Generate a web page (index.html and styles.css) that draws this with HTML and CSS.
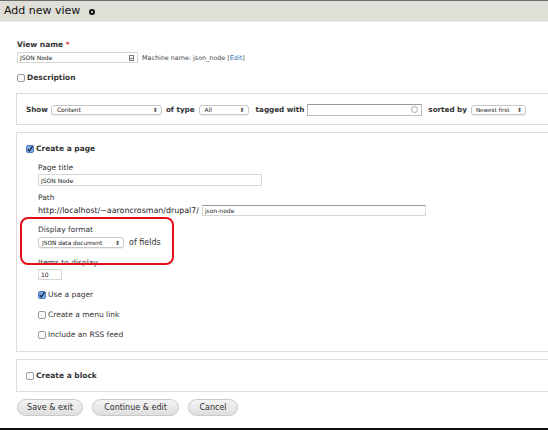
FILE: index.html
```html
<!DOCTYPE html>
<html>
<head>
<meta charset="utf-8">
<link rel="stylesheet" href="styles.css">
</head>
<body>
<div class="header">
  <h1 class="title">Add new view</h1>
  <span class="gear"></span>
</div>
<div class="main">
  <div class="label bold">View name <span class="req">*</span></div>
  <div class="row name-row">
    <div class="input w-name"><span>JSON Node</span><span class="kbd-icon"></span></div>
    <span class="machine">Machine name: json_node [<a class="link">Edit</a>]</span>
  </div>
  <div class="row check-row desc">
    <span class="cb"></span><span class="bold">Description</span>
  </div>

  <div class="fieldset fs-show">
    <div class="row show-row">
      <span class="bold">Show</span>
      <div class="select w-content"><span>Content</span><span class="arrows">⬍</span></div>
      <span class="bold">of type</span>
      <div class="select w-all"><span>All</span><span class="arrows">⬍</span></div>
      <span class="bold">tagged with</span>
      <div class="input w-tag"><span></span><span class="throbber"></span></div>
      <span class="bold">sorted by</span>
      <div class="select w-sort"><span>Newest first</span><span class="arrows">⬍</span></div>
    </div>
  </div>

  <div class="fieldset fs-page">
    <div class="row check-row">
      <span class="cb checked"><svg viewBox="0 0 8 8" width="8" height="8"><rect x="0.5" y="0.5" width="7" height="7" rx="1.5" fill="#7aa7e6" stroke="#4f7cc0"/><path d="M1.8 4.2 L3.3 6 L6.6 1.2" fill="none" stroke="#1c2540" stroke-width="1.3"/></svg></span><span class="bold">Create a page</span>
    </div>
    <div class="indent">
      <div class="label l-pagetitle">Page title</div>
      <div class="input w-title"><span>JSON Node</span></div>
      <div class="label l-path">Path</div>
      <div class="row path-row">
        <span>http://localhost/~aaroncrosman/drupal7/</span>
        <div class="input w-path dark-top"><span>json-node</span></div>
      </div>
      <div class="label l-format">Display format</div>
      <div class="row format-row">
        <div class="select w-format"><span>JSON data document</span><span class="arrows">⬍</span></div>
        <span class="of-fields">of fields</span>
      </div>
      <div class="label l-items">Items to display</div>
      <div class="input w-items"><span>10</span></div>
      <div class="row check-row l-pager">
        <span class="cb checked"><svg viewBox="0 0 8 8" width="8" height="8"><rect x="0.5" y="0.5" width="7" height="7" rx="1.5" fill="#7aa7e6" stroke="#4f7cc0"/><path d="M1.8 4.2 L3.3 6 L6.6 1.2" fill="none" stroke="#1c2540" stroke-width="1.3"/></svg></span><span>Use a pager</span>
      </div>
      <div class="row check-row l-menu">
        <span class="cb"></span><span>Create a menu link</span>
      </div>
      <div class="row check-row l-rss">
        <span class="cb"></span><span>Include an RSS feed</span>
      </div>
    </div>
    <div class="annotation"></div>
  </div>

  <div class="fieldset fs-block">
    <div class="row check-row">
      <span class="cb"></span><span class="bold">Create a block</span>
    </div>
  </div>

  <div class="row buttons">
    <span class="btn b-save">Save &amp; exit</span>
    <span class="btn b-cont">Continue &amp; edit</span>
    <span class="btn b-cancel">Cancel</span>
  </div>
</div>
<div class="bottom-bar"></div>
</body>
</html>
```

FILE: styles.css
```css
html, body {
  margin: 0;
  padding: 0;
  background: #fff;
  overflow: hidden;
  width: 548px;
  height: 430px;
  font-family: "DejaVu Sans", sans-serif;
  font-size: 7.5px;
  color: #333;
}
.header {
  height: 20px;
  background: #dfdfd7;
  border-top: 1px solid #6b6b6b;
  border-bottom: 1px solid #ececea;
  display: flex;
  align-items: center;
  padding-left: 4px;
  overflow: hidden;
}
.title {
  margin: 0;
  font-size: 11px;
  font-weight: normal;
  color: #111;
  line-height: 14px;
}
.gear {
  box-sizing: border-box;
  width: 6px;
  height: 6px;
  border: 2px solid #111;
  border-radius: 50%;
  margin-left: 9px;
  margin-top: 2px;
  background: #fff;
}
.main {
  padding: 18px 0 0 17px;
}
.bold { font-weight: bold; }
.label {
  line-height: 10px;
  height: 10px;
  color: #333;
}
.req { color: #d33; }
.row {
  display: flex;
  align-items: center;
}
.input, .select {
  box-sizing: border-box;
  display: flex;
  align-items: center;
  justify-content: space-between;
  background: #fff;
  font-size: 6px;
  color: #222;
}
.input {
  border: 1px solid #d6d6d6;
  padding: 0 2px;
}
.input.dark-top { border-top-color: #999; }
.name-row { margin-top: 2px; height: 11px; }
.w-name { width: 121px; height: 11px; }
.kbd-icon {
  box-sizing: border-box;
  width: 5px;
  height: 6px;
  border: 1px solid #777;
  margin-right: 1px;
  background: linear-gradient(#fff 2px, #777 2px, #777 3px, #fff 3px);
}
.machine {
  font-size: 6.4px;
  margin-left: 4px;
  color: #444;
}
.link { color: #2b6fb6; }
.check-row { line-height: 10px; height: 10px; }
.desc { margin-top: 10px; }
.cb {
  box-sizing: border-box;
  width: 8px;
  height: 8px;
  border: 1px solid #9a9a9a;
  border-radius: 2px;
  background: #fafafa;
  margin-right: 2px;
  display: inline-block;
  flex: none;
}
.cb.checked { border: none; }
.cb svg { display: block; }
.fieldset {
  position: relative;
  border: 1px solid #dcdcdc;
  margin-left: -1px;
  width: 560px;
  box-sizing: border-box;
}
.fs-show {
  margin-top: 10px;
  padding: 9px 0 7px 9px;
  height: 32px;
}
.show-row { height: 13px; font-size: 7.2px; }
.select {
  border: 1px solid #c8c8c8;
  border-radius: 3px;
  height: 10px;
  padding: 0 3px 0 5px;
  box-shadow: 0 1px 0 #eee;
}
.arrows {
  font-size: 6px;
  color: #555;
  line-height: 6px;
}
.w-content { width: 111px; margin: 0 4px 0 3px; }
.w-all { width: 50px; margin: 0 7px 0 4px; }
.w-tag { width: 115px; height: 12px; margin: 0 6px 0 3px; border-color: #bbb; border-top-color: #999; }
.throbber {
  width: 5px;
  height: 5px;
  border: 1px solid #aaa;
  border-radius: 50%;
  margin-right: 1px;
}
.w-sort { width: 55px; margin-left: 4px; padding-left: 4px; font-size: 5.6px; }
.fs-page {
  margin-top: 7px;
  padding: 11px 0 11px 9px;
}
.indent { padding-left: 12px; }
.l-pagetitle { margin-top: 9px; }
.w-title { width: 224px; height: 12px; margin-top: 1px; }
.l-path { margin-top: 7px; }
.path-row { margin-top: 1px; height: 12px; font-size: 7.9px; color: #222; }
.w-path { width: 224px; height: 11px; margin-left: 3px; }
.l-format { margin-top: 9px; }
.format-row { margin-top: 2px; height: 11px; }
.w-format { width: 86px; height: 11px; font-size: 5.8px; padding-left: 3px; }
.of-fields { margin-left: 5px; font-size: 8px; }
.l-items { margin-top: 10px; }
.w-items { width: 24px; height: 11px; margin-top: 1px; }
.l-pager { margin-top: 10px; }
.l-menu { margin-top: 10px; }
.l-rss { margin-top: 10px; }
.annotation {
  position: absolute;
  left: 3px;
  top: 84px;
  width: 154px;
  height: 48px;
  box-sizing: border-box;
  border: 2px solid #e3101a;
  border-radius: 8px;
}
.fs-block {
  margin-top: 7px;
  padding: 11px 0 10px 9px;
}
.buttons {
  margin-top: 7px;
  height: 17px;
}
.btn {
  box-sizing: border-box;
  height: 17px;
  border: 1px solid #c9c9c9;
  border-radius: 9px;
  background: linear-gradient(#f4f4f4, #dedede);
  color: #333;
  font-size: 8px;
  display: flex;
  align-items: center;
  justify-content: center;
}
.b-save { width: 66px; }
.b-cont { width: 87px; margin-left: 9px; }
.b-cancel { width: 50px; margin-left: 9px; }
.bottom-bar {
  position: absolute;
  left: 0;
  top: 428px;
  width: 548px;
  height: 2px;
  background: #111;
}
```
